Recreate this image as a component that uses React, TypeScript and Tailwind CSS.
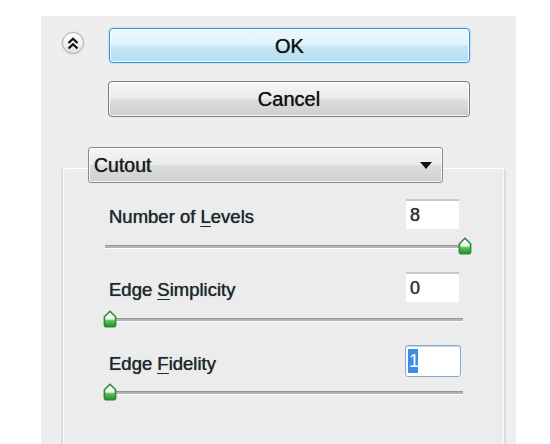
import React from "react";

const font = { fontFamily: '"Liberation Sans", Arial, sans-serif' };

function Thumb({ side }: { side: "left" | "right" }) {
  return (
    <svg
      width="14"
      height="18"
      viewBox="0 0 14 18"
      className={
        "absolute top-[-2px] " + (side === "left" ? "left-[-2px]" : "left-[353px]")
      }
    >
      <defs>
        <linearGradient id={"tg" + side} x1="0" y1="0" x2="0" y2="1">
          <stop offset="0" stopColor="#ffffff" />
          <stop offset="0.5" stopColor="#eef8ee" />
          <stop offset="0.6" stopColor="#5cc45c" />
          <stop offset="1" stopColor="#1f8f2a" />
        </linearGradient>
      </defs>
      <path
        d="M7 1.2 L12.6 6.8 L12.6 14.8 Q12.6 16.8 10.6 16.8 L3.4 16.8 Q1.4 16.8 1.4 14.8 L1.4 6.8 Z"
        fill={"url(#tg" + side + ")"}
        stroke="#2c8a33"
        strokeWidth="1.6"
        strokeLinejoin="round"
      />
    </svg>
  );
}

function Slider({ side }: { side: "left" | "right" }) {
  return (
    <div className="relative ml-[42px] w-[358px] h-[16px] mt-[10px]">
      <div className="absolute left-0 right-0 top-[6px] h-[4px] flex flex-col">
        <div className="h-[1px] bg-[#979797]" />
        <div className="h-[2px] bg-[#b3b3b3]" />
        <div className="h-[1px] bg-[#ffffff]" />
      </div>
      <Thumb side={side} />
    </div>
  );
}

const soft = "[text-shadow:0_0_0.7px_rgba(20,30,40,0.9)]";

function Label({ pre, u, post }: { pre: string; u: string; post: string }) {
  return (
    <div className={"flex-1 text-[18.5px] text-[#1e2830] pt-[6px] " + soft} style={font}>
      {pre}
      <span className="underline underline-offset-[3px]">{u}</span>
      {post}
    </div>
  );
}

export default function App() {
  return (
    <div className="w-[550px] h-[444px] bg-white overflow-hidden pl-[41px] pt-[16px]" style={font}>
      <div className="w-[475px] h-[428px] bg-[#eeeeee] pt-[12px] flex flex-col">
        {/* top row */}
        <div className="flex items-start">
          <div className="mt-[4px] ml-[21px] w-[22px] h-[22px] rounded-full border border-[#b0b0b0] bg-[linear-gradient(to_bottom,#ffffff,#e2e2e2)] shadow-[0_0_2px_#c8c8c8] flex items-center justify-center">
            <svg width="12" height="13" viewBox="0 0 12 13">
              <path d="M1.5 6 L6 1.8 L10.5 6" fill="none" stroke="#111" strokeWidth="2.2" />
              <path d="M1.5 11.5 L6 7.3 L10.5 11.5" fill="none" stroke="#111" strokeWidth="2.2" />
            </svg>
          </div>
          <div className={"ml-[25px] w-[361px] h-[35px] rounded-[4px] border border-[#3596d0] shadow-[0_0_2px_#6cc4f0,inset_0_0_0_1px_rgba(255,255,255,0.8)] bg-[linear-gradient(to_bottom,#eef8fd_0%,#e2f3fc_48%,#c6e8f8_52%,#b5dcef_100%)] flex items-center justify-center text-[20px] text-[#111] " + soft}>
            OK
          </div>
        </div>
        {/* cancel */}
        <div className={"mt-[18px] ml-[67px] w-[362px] h-[36px] rounded-[4px] border border-[#7a7a7a] shadow-[inset_0_0_0_1px_rgba(255,255,255,0.85)] bg-[linear-gradient(to_bottom,#f6f6f6_0%,#ececec_48%,#dedede_52%,#cdcdcd_100%)] flex items-center justify-center text-[20px] text-[#111] " + soft}>
          Cancel
        </div>
        {/* group box */}
        <div className="mt-[51px] ml-[20px] w-[445px] flex-1 border-t border-l-2 border-r-2 border-t-white border-l-[#dcdcdc] border-r-[#dcdcdc] shadow-[inset_1px_0_0_#fafafa,inset_-1px_0_0_#fafafa] rounded-tl-[3px] rounded-tr-[3px] bg-[#ececec] flex flex-col">
          {/* dropdown */}
          <div className="-mt-[22px] ml-[25px] w-[355px] h-[36px] rounded-[3px] border border-[#8a8a8a] shadow-[inset_0_0_0_1px_rgba(255,255,255,0.8)] bg-[linear-gradient(to_bottom,#f4f4f4_0%,#ececec_48%,#dcdcdc_52%,#cfcfcf_100%)] flex items-center pl-[5px] pr-[10px]">
            <span className={"flex-1 text-[19.5px] text-[#1b1b1b] pt-[2px] " + soft}>Cutout</span>
            <svg width="12" height="7" viewBox="0 0 12 7">
              <path d="M0 0 L12 0 L6 7 Z" fill="#111" />
            </svg>
          </div>

          {/* row 1 */}
          <div className="mt-[16px] flex items-center pl-[46px] pr-[45px] h-[30px]">
            <Label pre="Number of " u="L" post="evels" />
            <div className={"w-[53px] h-[30px] bg-white border-t-2 border-[#c8c8c8] flex items-center pl-[4px] text-[18px] text-[#333] " + soft}>
              8
            </div>
          </div>
          <Slider side="right" />

          {/* row 2 */}
          <div className="mt-[17px] flex items-center pl-[46px] pr-[45px] h-[30px]">
            <Label pre="Edge " u="S" post="implicity" />
            <div className={"w-[53px] h-[30px] bg-white border-t-2 border-[#c8c8c8] flex items-center pl-[4px] text-[18px] text-[#333] " + soft}>
              0
            </div>
          </div>
          <Slider side="left" />

          {/* row 3 */}
          <div className="mt-[17px] flex items-center pl-[46px] pr-[43px] h-[32px]">
            <Label pre="Edge " u="F" post="idelity" />
            <div className="w-[56px] h-[32px] bg-white border border-[#86abd2] rounded-[3px] shadow-[inset_0_1px_0_#c4d6ea] flex items-center pl-[2px]">
              <span className="bg-[#3a8ee6] text-white text-[18px] leading-[24px] px-[1px] w-[10px]">1</span>
            </div>
          </div>
          <div className="-mt-[2px]">
            <Slider side="left" />
          </div>
        </div>
      </div>
    </div>
  );
}
